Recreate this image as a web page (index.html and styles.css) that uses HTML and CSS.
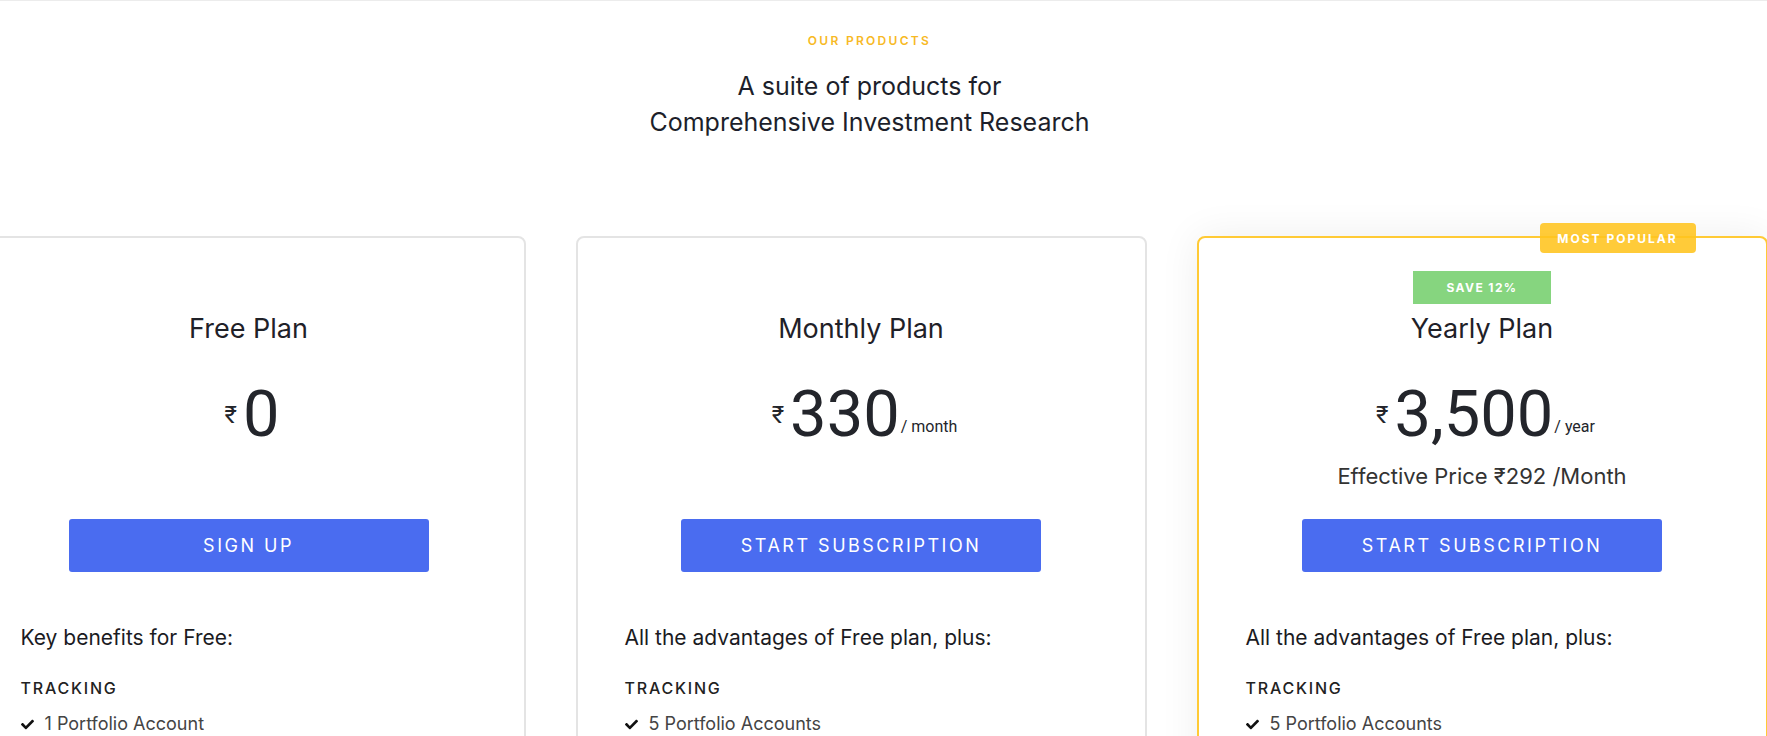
FILE: index.html
```html
<!DOCTYPE html>
<html lang="en">
<head>
<meta charset="utf-8">
<title>Our Products</title>
<link rel="stylesheet" href="styles.css">
</head>
<body>
<div class="topline"></div>
<main class="page">
  <header class="intro">
    <p class="eyebrow">OUR PRODUCTS</p>
    <h2 class="headline">A suite of products for<br>Comprehensive Investment Research</h2>
  </header>

  <section class="plans">
    <article class="plan plan-free">
      <div class="tag-slot"></div>
      <h3 class="plan-name">Free Plan</h3>
      <div class="price-area">
        <div class="price"><span class="cur">₹</span><span class="amt">0</span></div>
      </div>
      <a class="btn" href="#">SIGN UP</a>
      <p class="lead">Key benefits for Free:</p>
      <h4 class="group">TRACKING</h4>
      <ul class="features">
        <li><svg class="check" viewBox="0 0 512 512"><path d="M173.9 439.4l-166.4-166.4c-10-10-10-26.2 0-36.2l36.2-36.2c10-10 26.2-10 36.2 0L192 312.7 432.1 72.6c10-10 26.2-10 36.2 0l36.2 36.2c10 10 10 26.2 0 36.2l-294.4 294.4c-10 10-26.2 10-36.2 0z"/></svg>1 Portfolio Account</li>
        <li><svg class="check" viewBox="0 0 512 512"><path d="M173.9 439.4l-166.4-166.4c-10-10-10-26.2 0-36.2l36.2-36.2c10-10 26.2-10 36.2 0L192 312.7 432.1 72.6c10-10 26.2-10 36.2 0l36.2 36.2c10 10 10 26.2 0 36.2l-294.4 294.4c-10 10-26.2 10-36.2 0z"/></svg>Basic Portfolio Analytics</li>
      </ul>
    </article>

    <article class="plan">
      <div class="tag-slot"></div>
      <h3 class="plan-name">Monthly Plan</h3>
      <div class="price-area">
        <div class="price"><span class="cur">₹</span><span class="amt">330</span><span class="per">/ month</span></div>
      </div>
      <a class="btn" href="#">START SUBSCRIPTION</a>
      <p class="lead">All the advantages of Free plan, plus:</p>
      <h4 class="group">TRACKING</h4>
      <ul class="features">
        <li><svg class="check" viewBox="0 0 512 512"><path d="M173.9 439.4l-166.4-166.4c-10-10-10-26.2 0-36.2l36.2-36.2c10-10 26.2-10 36.2 0L192 312.7 432.1 72.6c10-10 26.2-10 36.2 0l36.2 36.2c10 10 10 26.2 0 36.2l-294.4 294.4c-10 10-26.2 10-36.2 0z"/></svg>5 Portfolio Accounts</li>
        <li><svg class="check" viewBox="0 0 512 512"><path d="M173.9 439.4l-166.4-166.4c-10-10-10-26.2 0-36.2l36.2-36.2c10-10 26.2-10 36.2 0L192 312.7 432.1 72.6c10-10 26.2-10 36.2 0l36.2 36.2c10 10 10 26.2 0 36.2l-294.4 294.4c-10 10-26.2 10-36.2 0z"/></svg>Advanced Portfolio Analytics</li>
      </ul>
    </article>

    <article class="plan plan-popular">
      <span class="popular">MOST POPULAR</span>
      <div class="tag-slot"><span class="save">SAVE 12%</span></div>
      <h3 class="plan-name">Yearly Plan</h3>
      <div class="price-area">
        <div class="price"><span class="cur">₹</span><span class="amt">3,500</span><span class="per">/ year</span></div>
        <p class="effective">Effective Price ₹292 /Month</p>
      </div>
      <a class="btn" href="#">START SUBSCRIPTION</a>
      <p class="lead">All the advantages of Free plan, plus:</p>
      <h4 class="group">TRACKING</h4>
      <ul class="features">
        <li><svg class="check" viewBox="0 0 512 512"><path d="M173.9 439.4l-166.4-166.4c-10-10-10-26.2 0-36.2l36.2-36.2c10-10 26.2-10 36.2 0L192 312.7 432.1 72.6c10-10 26.2-10 36.2 0l36.2 36.2c10 10 10 26.2 0 36.2l-294.4 294.4c-10 10-26.2 10-36.2 0z"/></svg>5 Portfolio Accounts</li>
        <li><svg class="check" viewBox="0 0 512 512"><path d="M173.9 439.4l-166.4-166.4c-10-10-10-26.2 0-36.2l36.2-36.2c10-10 26.2-10 36.2 0L192 312.7 432.1 72.6c10-10 26.2-10 36.2 0l36.2 36.2c10 10 10 26.2 0 36.2l-294.4 294.4c-10 10-26.2 10-36.2 0z"/></svg>Advanced Portfolio Analytics</li>
      </ul>
    </article>
  </section>
</main>
</body>
</html>
```

FILE: styles.css
```css
html, body {
  margin: 0;
  padding: 0;
  background: #ffffff;
  overflow: hidden;
}

body {
  font-family: Inter, "Noto Sans", "Liberation Sans", sans-serif;
  color: #1f2129;
}

.topline {
  height: 1px;
  background: #ececec;
}

.page {
  width: 1739px;
}

.intro {
  display: flex;
  flex-direction: column;
  align-items: center;
  padding-top: 31px;
}

.eyebrow {
  margin: 0;
  font-size: 12px;
  line-height: 18px;
  font-weight: 600;
  letter-spacing: 2.3px;
  color: #f7b924;
}

.headline {
  margin: 18px 0 0;
  font-size: 25px;
  line-height: 36px;
  font-weight: 400;
  text-align: center;
  color: #1d1f2b;
}

.plans {
  display: flex;
  justify-content: center;
  gap: 50px;
  margin-top: 96px;
}

.plan {
  position: relative;
  flex: 0 0 571px;
  box-sizing: border-box;
  height: 720px;
  border: 2px solid #e4e4e4;
  border-radius: 8px;
  padding: 33px 47px 0;
  display: flex;
  flex-direction: column;
  align-items: center;
  background: #fff;
}

.plan-free {
  flex-basis: 554px;
}

.plan-popular {
  border-color: #ffca35;
  box-shadow: 0 0 40px rgba(0, 0, 0, 0.07);
}

.popular {
  position: absolute;
  top: -15px;
  right: 70px;
  width: 156px;
  height: 30px;
  display: flex;
  align-items: center;
  justify-content: center;
  background: rgba(255, 196, 30, 0.88);
  border-radius: 4px;
  color: #fff;
  font-size: 12px;
  font-weight: 700;
  letter-spacing: 2px;
}

.tag-slot {
  height: 33px;
  display: flex;
  justify-content: center;
}

.save {
  width: 138px;
  height: 33px;
  display: flex;
  align-items: center;
  justify-content: center;
  background: #86d57f;
  color: #fff;
  font-size: 12px;
  font-weight: 700;
  letter-spacing: 1.4px;
}

.plan-name {
  margin: 9px 0 0;
  font-size: 27px;
  line-height: 32px;
  font-weight: 400;
  color: #1f2128;
}

.price-area {
  margin-top: 37px;
  height: 137px;
  display: flex;
  flex-direction: column;
  align-items: center;
}

.price {
  padding-left: 7px;
  font-family: Roboto, "Liberation Sans", sans-serif;
  font-size: 65px;
  line-height: 64px;
  color: #23252b;
  white-space: nowrap;
}

.cur {
  font-size: 24px;
  line-height: 1;
  vertical-align: 13px;
  margin-right: 6px;
}

.amt {
  font-weight: 400;
}

.per {
  font-size: 16px;
  line-height: 1;
  vertical-align: 4px;
  margin-left: 1px;
}

.effective {
  margin: 15px 0 0;
  font-size: 22px;
  line-height: 30px;
  color: #333;
}

.btn {
  width: 360px;
  height: 53px;
  flex: 0 0 auto;
  display: flex;
  align-items: center;
  justify-content: center;
  background: #4a6cf0;
  border-radius: 3px;
  color: #fff;
  text-decoration: none;
  font-size: 18px;
  letter-spacing: 2.5px;
}

.lead {
  align-self: stretch;
  margin: 51px 0 0;
  font-size: 21px;
  line-height: 30px;
  color: #1b1b1f;
}

.group {
  align-self: stretch;
  margin: 23px 0 0;
  font-size: 16px;
  line-height: 24px;
  font-weight: 500;
  letter-spacing: 1.8px;
  color: #222;
}

.features {
  align-self: stretch;
  list-style: none;
  margin: 11px 0 0;
  padding: 0;
}

.features li {
  display: flex;
  align-items: center;
  gap: 11px;
  font-size: 18px;
  line-height: 26px;
  color: #444;
  margin-bottom: 8px;
}

.check {
  width: 13px;
  height: 13px;
  flex: 0 0 13px;
  fill: #111;
}
```
